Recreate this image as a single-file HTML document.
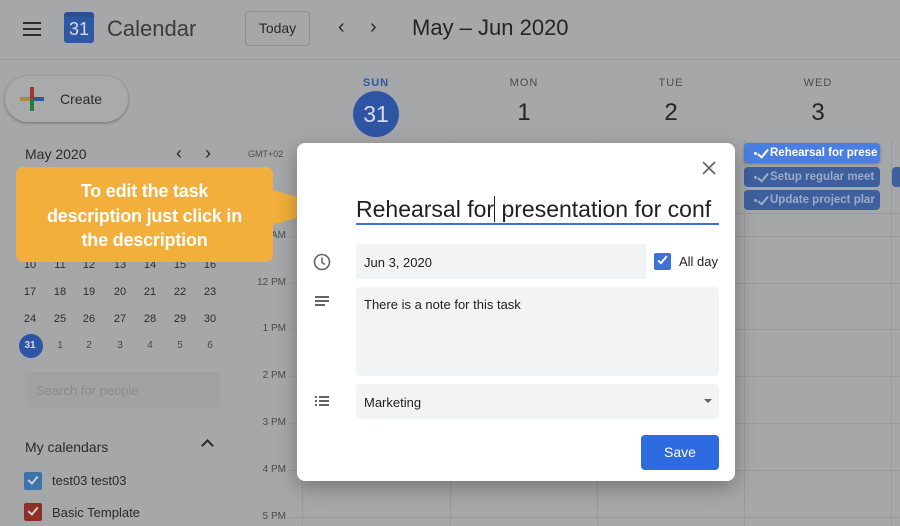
<!DOCTYPE html>
<html><head><meta charset="utf-8"><style>
*{margin:0;padding:0;box-sizing:border-box}
body{width:900px;height:526px;overflow:hidden;background:#a6a7a9;font-family:"Liberation Sans",Arial,sans-serif;position:relative;color:#1e1f21}
.a{position:absolute}
.hl{position:absolute;height:1px;background:#999a9c}
.vl{position:absolute;width:1px;background:#999a9c}
.tl{position:absolute;font-size:10px;color:#4a4b4d;width:60px;text-align:right;left:226px}
.mc{position:absolute;font-size:11px;width:20px;text-align:center;color:#2b2c2e}
.dn{position:absolute;font-size:11px;letter-spacing:1px;color:#4a4b4d;width:60px;text-align:center}
.dd{position:absolute;font-size:24px;color:#232426;width:60px;text-align:center}
.ev{position:absolute;left:744px;width:136px;height:20px;border-radius:4px;font-size:11.5px;font-weight:bold;padding:4px 0 0 26px;white-space:nowrap;overflow:hidden}
.ev:before{content:"";position:absolute;left:10px;top:9px;width:3px;height:3px;border-radius:50%;background:currentColor}
.ev:after{content:"";position:absolute;left:16px;top:4px;width:4px;height:9px;border-right:2px solid currentColor;border-bottom:2px solid currentColor;transform:rotate(40deg)}
</style></head><body>
<div class="a" style="left:23px;top:22px;width:18px;height:2px;background:#2a2b2d;box-shadow:0 6px 0 #2a2b2d,0 12px 0 #2a2b2d"></div>
<div class="a" style="left:64px;top:12px;width:30px;height:31px;background:#2f58a3;border-radius:3px;border-top:5px solid #2b4f8f;color:#d6dbe6;font-size:18px;text-align:center;line-height:24px">31</div>
<div class="a" style="left:107px;top:16px;font-size:22px;color:#3a3b3d">Calendar</div>
<div class="a" style="left:245px;top:11px;width:65px;height:35px;border:1px solid #8e8f91;border-radius:4px;font-size:14px;text-align:center;line-height:33px;color:#2a2b2d">Today</div>
<div class="a" style="left:338px;top:16px;font-size:20px;color:#2a2b2d">&#8249;</div>
<div class="a" style="left:370px;top:16px;font-size:20px;color:#2a2b2d">&#8250;</div>
<div class="a" style="left:412px;top:15px;font-size:22px;color:#232426">May – Jun 2020</div>
<div class="hl" style="left:0;top:59px;width:900px;background:#98999b"></div>
<div class="a" style="left:5px;top:76px;width:123px;height:46px;border-radius:23px;background:#a9aaac;box-shadow:0 1px 3px rgba(0,0,0,.35)"></div>
<div class="a" style="left:20px;top:97px;width:24px;height:4px;background:linear-gradient(90deg,#a58e3a 50%,#2f58a3 50%)"></div>
<div class="a" style="left:30px;top:87px;width:4px;height:24px;background:linear-gradient(#a3342c 50%,#2f7a3e 50%)"></div>
<div class="a" style="left:60px;top:91px;font-size:14px;color:#2a2b2d">Create</div>
<div class="a" style="left:25px;top:146px;font-size:14px;color:#2a2b2d">May 2020</div>
<div class="a" style="left:176px;top:143px;font-size:18px;color:#2a2b2d">&#8249;</div>
<div class="a" style="left:205px;top:143px;font-size:18px;color:#2a2b2d">&#8250;</div>
<div class="mc" style="left:20px;top:259px">10</div><div class="mc" style="left:50px;top:259px">11</div><div class="mc" style="left:79px;top:259px">12</div><div class="mc" style="left:110px;top:259px">13</div><div class="mc" style="left:140px;top:259px">14</div><div class="mc" style="left:170px;top:259px">15</div><div class="mc" style="left:200px;top:259px">16</div>
<div class="mc" style="left:20px;top:286px">17</div><div class="mc" style="left:50px;top:286px">18</div><div class="mc" style="left:79px;top:286px">19</div><div class="mc" style="left:110px;top:286px">20</div><div class="mc" style="left:140px;top:286px">21</div><div class="mc" style="left:170px;top:286px">22</div><div class="mc" style="left:200px;top:286px">23</div>
<div class="mc" style="left:20px;top:313px">24</div><div class="mc" style="left:50px;top:313px">25</div><div class="mc" style="left:79px;top:313px">26</div><div class="mc" style="left:110px;top:313px">27</div><div class="mc" style="left:140px;top:313px">28</div><div class="mc" style="left:170px;top:313px">29</div><div class="mc" style="left:200px;top:313px">30</div>
<div class="a" style="left:19px;top:334px;width:24px;height:24px;border-radius:50%;background:#2d55a3"></div>
<div class="mc" style="left:20px;top:340px;color:#d6dbe6;font-weight:bold;font-size:10px">31</div>
<div class="mc" style="left:50px;top:340px;color:#4a4b4d;font-size:10px">1</div><div class="mc" style="left:79px;top:340px;color:#4a4b4d;font-size:10px">2</div><div class="mc" style="left:110px;top:340px;color:#4a4b4d;font-size:10px">3</div><div class="mc" style="left:140px;top:340px;color:#4a4b4d;font-size:10px">4</div><div class="mc" style="left:170px;top:340px;color:#4a4b4d;font-size:10px">5</div><div class="mc" style="left:200px;top:340px;color:#4a4b4d;font-size:10px">6</div>
<div class="a" style="left:25px;top:372px;width:195px;height:36px;background:#a1a2a4;border-radius:4px;font-size:13px;color:#8a8b8d;padding:11px 0 0 11px">Search for people</div>
<div class="a" style="left:25px;top:439px;font-size:14px;color:#2a2b2d">My calendars</div>
<div class="a" style="left:203px;top:441px;width:9px;height:9px;border-left:2px solid #2a2b2d;border-top:2px solid #2a2b2d;transform:rotate(45deg)"></div>
<div class="a" style="left:24px;top:472px;width:18px;height:18px;background:#3d73aa;border-radius:2px"></div>
<div class="a" style="left:30px;top:474px;width:6px;height:10px;border-right:2px solid #c8d0da;border-bottom:2px solid #c8d0da;transform:rotate(40deg)"></div>
<div class="a" style="left:52px;top:473px;font-size:13px;color:#2a2b2d">test03 test03</div>
<div class="a" style="left:24px;top:503px;width:18px;height:18px;background:#8e2f27;border-radius:2px"></div>
<div class="a" style="left:30px;top:505px;width:6px;height:10px;border-right:2px solid #d8ccca;border-bottom:2px solid #d8ccca;transform:rotate(40deg)"></div>
<div class="a" style="left:52px;top:505px;font-size:13px;color:#2a2b2d">Basic Template</div>
<div class="a" style="left:248px;top:149px;font-size:9px;color:#4a4b4d">GMT+02</div>
<div class="dn" style="left:346px;top:77px;color:#2d55a3;font-weight:bold">SUN</div>
<div class="a" style="left:353px;top:91px;width:46px;height:46px;border-radius:50%;background:#2d55a3;color:#d6dbe6;font-size:23px;text-align:center;line-height:46px">31</div>
<div class="dn" style="left:494px;top:77px">MON</div><div class="dd" style="left:494px;top:99px">1</div>
<div class="dn" style="left:641px;top:77px">TUE</div><div class="dd" style="left:641px;top:99px">2</div>
<div class="dn" style="left:788px;top:77px">WED</div><div class="dd" style="left:788px;top:99px">3</div>
<div class="vl" style="left:302px;top:140px;height:386px"></div>
<div class="vl" style="left:450px;top:140px;height:386px"></div>
<div class="vl" style="left:597px;top:140px;height:386px"></div>
<div class="vl" style="left:744px;top:140px;height:386px"></div>
<div class="vl" style="left:891px;top:140px;height:386px"></div>
<div class="hl" style="left:290px;top:213px;width:610px"></div>
<div class="hl" style="left:290px;top:236px;width:610px"></div>
<div class="hl" style="left:290px;top:283px;width:610px"></div>
<div class="hl" style="left:290px;top:329px;width:610px"></div>
<div class="hl" style="left:290px;top:376px;width:610px"></div>
<div class="hl" style="left:290px;top:423px;width:610px"></div>
<div class="hl" style="left:290px;top:470px;width:610px"></div>
<div class="hl" style="left:290px;top:517px;width:610px"></div>
<div class="tl" style="top:277px">12 PM</div>
<div class="tl" style="top:323px">1 PM</div>
<div class="tl" style="top:370px">2 PM</div>
<div class="tl" style="top:417px">3 PM</div>
<div class="tl" style="top:464px">4 PM</div>
<div class="tl" style="top:511px">5 PM</div>
<div class="tl" style="top:230px">AM</div>
<div class="ev" style="top:143px;background:#4a7fe0;color:#fff;box-shadow:0 1px 3px rgba(0,0,0,.3)">Rehearsal for prese</div>
<div class="ev" style="top:167px;background:#3d5f9e;color:#9eabc4">Setup regular meet</div>
<div class="ev" style="top:190px;background:#3d5f9e;color:#9eabc4">Update project plar</div>
<div class="a" style="left:892px;top:167px;width:10px;height:20px;background:#3d5f9e;border-radius:4px"></div>
<div class="a" style="left:16px;top:167px;width:257px;height:95px;background:#f2af3b;border-radius:7px"></div>
<svg class="a" style="left:272px;top:185px" width="66" height="42"><polygon points="0,5 63,22 0,40" fill="#f2af3b"/></svg>
<div class="a" style="left:16px;top:179px;width:257px;text-align:center;color:#fff;font-weight:bold;font-size:18px;line-height:24.5px;letter-spacing:-0.2px">To edit the task<br>description just click in<br>the description</div>
<div class="a" style="left:297px;top:143px;width:438px;height:338px;background:#fff;border-radius:8px;box-shadow:0 6px 20px rgba(0,0,0,.3)"></div>
<svg class="a" style="left:702px;top:161px" width="14" height="14"><path d="M1 1L13 13M13 1L1 13" stroke="#5f6368" stroke-width="1.6"/></svg>
<div class="a" style="left:356px;top:196px;width:363px;font-size:23px;color:#202124;white-space:nowrap;overflow:hidden">Rehearsal for<span style="border-left:1px solid #202124"></span> presentation for conf</div>
<div class="a" style="left:356px;top:223px;width:363px;height:2px;background:#3f6fd8"></div>
<svg class="a" style="left:313px;top:253px" width="18" height="18"><circle cx="9" cy="9" r="7.5" fill="none" stroke="#5f6368" stroke-width="1.6"/><path d="M9 4.5V9.5L12 11.5" fill="none" stroke="#5f6368" stroke-width="1.5"/></svg>
<div class="a" style="left:356px;top:244px;width:290px;height:35px;background:#f1f3f4;font-size:13px;color:#202124;padding:11px 0 0 8px">Jun 3, 2020</div>
<div class="a" style="left:654px;top:253px;width:17px;height:17px;background:#3f6fd8;border-radius:2px"></div>
<div class="a" style="left:660px;top:254px;width:5px;height:10px;border-right:2px solid #fff;border-bottom:2px solid #fff;transform:rotate(40deg)"></div>
<div class="a" style="left:679px;top:254px;font-size:13px;color:#202124">All day</div>
<div class="a" style="left:315px;top:296px;width:14px;height:2px;background:#5f6368;box-shadow:0 4px 0 #5f6368"></div>
<div class="a" style="left:315px;top:304px;width:10px;height:2px;background:#5f6368"></div>
<div class="a" style="left:356px;top:287px;width:363px;height:89px;background:#f1f3f4;border-radius:4px;font-size:13px;color:#202124;padding:10px 0 0 8px">There is a note for this task</div>
<svg class="a" style="left:315px;top:396px" width="14" height="11"><g fill="#5f6368"><rect x="0" y="0" width="2" height="2"/><rect x="0" y="4" width="2" height="2"/><rect x="0" y="8" width="2" height="2"/><rect x="4" y="0" width="10" height="2"/><rect x="4" y="4" width="10" height="2"/><rect x="4" y="8" width="10" height="2"/></g></svg>
<div class="a" style="left:356px;top:384px;width:363px;height:35px;background:#f1f3f4;border-radius:4px;font-size:13px;color:#202124;padding:11px 0 0 8px">Marketing</div>
<div class="a" style="left:704px;top:399px;width:0;height:0;border-left:4px solid transparent;border-right:4px solid transparent;border-top:4px solid #5f6368"></div>
<div class="a" style="left:641px;top:435px;width:78px;height:35px;background:#2f6be0;border-radius:4px;color:#fff;font-size:14px;text-align:center;line-height:35px">Save</div>
</body></html>
